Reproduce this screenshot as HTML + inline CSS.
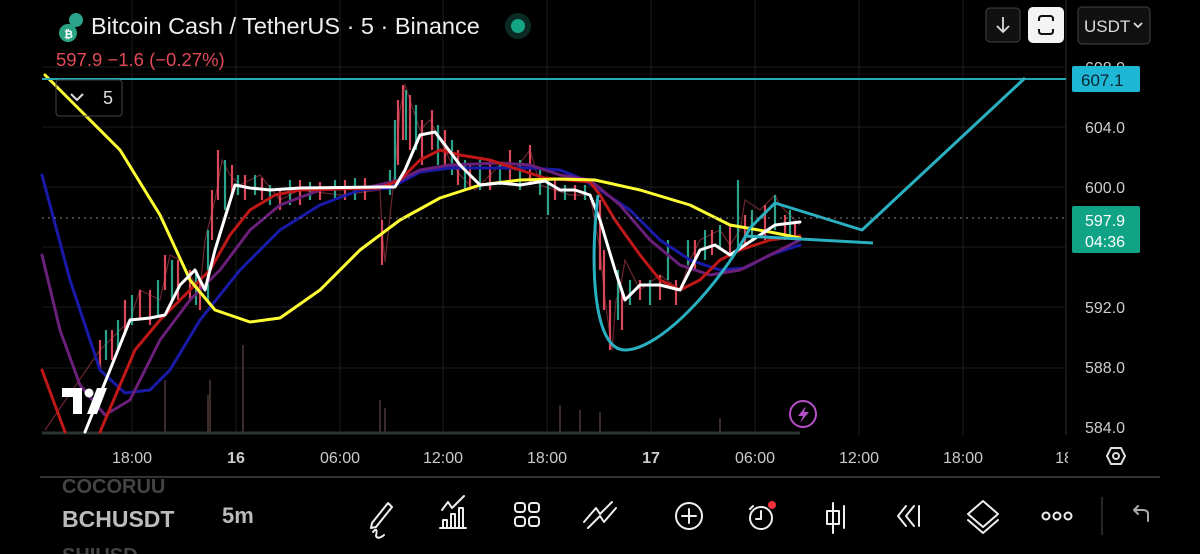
<!DOCTYPE html>
<html><head><meta charset="utf-8"><style>
html,body{margin:0;padding:0;background:#000;width:1200px;height:554px;overflow:hidden;font-family:"Liberation Sans",sans-serif}
svg{position:absolute;left:0;top:0}
</style></head><body>
<svg width="1200" height="554" viewBox="0 0 1200 554" xmlns="http://www.w3.org/2000/svg">
<rect width="1200" height="554" fill="#000"/>
<g stroke="#1c1c1c" stroke-width="1">
<line x1="132" y1="0" x2="132" y2="435"/><line x1="236" y1="0" x2="236" y2="435"/><line x1="340" y1="0" x2="340" y2="435"/><line x1="443" y1="0" x2="443" y2="435"/><line x1="547" y1="0" x2="547" y2="435"/><line x1="651" y1="0" x2="651" y2="435"/><line x1="755" y1="0" x2="755" y2="435"/><line x1="859" y1="0" x2="859" y2="435"/><line x1="963" y1="0" x2="963" y2="435"/>
<line x1="1066" y1="0" x2="1066" y2="435" stroke="#2a2a2a"/>
<line x1="42" y1="67" x2="1066" y2="67"/><line x1="42" y1="127" x2="1066" y2="127"/><line x1="42" y1="187" x2="1066" y2="187"/><line x1="42" y1="247" x2="1066" y2="247"/><line x1="42" y1="307" x2="1066" y2="307"/><line x1="42" y1="368" x2="1066" y2="368"/>
</g>
<g stroke="#3a2a2a" stroke-width="2">
<line x1="165" y1="433" x2="165" y2="380"/><line x1="208" y1="433" x2="208" y2="395"/><line x1="243" y1="433" x2="243" y2="345"/><line x1="210" y1="433" x2="210" y2="380"/><line x1="380" y1="433" x2="380" y2="400"/><line x1="385" y1="433" x2="385" y2="408"/><line x1="560" y1="433" x2="560" y2="405"/><line x1="580" y1="433" x2="580" y2="410"/><line x1="600" y1="433" x2="600" y2="412"/><line x1="720" y1="433" x2="720" y2="418"/>
</g>
<line x1="42" y1="433" x2="800" y2="433" stroke="#2b3530" stroke-width="3"/>
<polyline fill="none" stroke="#d14b5a" stroke-width="1.2" opacity=".5" points="45,430 100,350 130,320 140,290 160,300 170,255 180,260 200,290 205,240 215,200 222,160 230,175 240,185 260,175 280,200 300,190 340,195 380,190 382,230 385,262 395,170 400,110 405,85 410,100 420,130 430,120 440,140 450,160 460,175 475,190 500,165 515,170 530,150 540,185 570,195 590,195 600,250 605,300 612,350 616,300 620,290 625,260 640,290 660,275 680,290 690,260 700,240 720,230 730,245 740,230 745,200 760,210 775,195 780,205 800,225"/>
<path fill="none" stroke="#d9475a" stroke-width="2.2" d="M100,340V370 M112,330V360 M125,300V335 M140,290V320 M150,290V325 M165,255V290 M178,260V300 M190,270V300 M200,280V310 M212,190V240 M218,150V200 M232,165V195 M245,175V200 M262,178V200 M280,190V210 M300,180V205 M320,182V200 M345,180V200 M365,178V200 M382,220V265 M398,100V165 M403,85V140 M410,95V150 M422,120V165 M432,110V150 M445,130V165 M458,150V185 M470,165V190 M490,160V190 M510,150V180 M530,145V185 M555,180V200 M575,185V200 M600,200V270 M604,250V310 M610,300V350 M622,290V330 M640,280V300 M660,275V300 M676,280V305 M695,240V270 M712,230V255 M730,225V255 M745,215V245 M765,205V240 M785,215V240 M795,222V235"/>
<path fill="none" stroke="#2aa38a" stroke-width="2.2" d="M106,330V360 M118,320V350 M132,295V325 M158,280V315 M172,260V300 M196,270V305 M208,230V300 M225,160V210 M238,175V195 M255,175V195 M270,185V205 M290,180V205 M310,182V200 M335,180V200 M355,178V200 M390,170V195 M395,120V180 M406,90V140 M416,105V150 M438,125V165 M452,140V175 M465,160V190 M480,160V190 M500,165V185 M520,160V190 M540,170V195 M548,180V215 M565,185V200 M585,185V200 M618,270V320 M630,280V305 M650,280V305 M668,240V280 M688,240V265 M705,230V260 M720,225V250 M738,180V250 M752,210V240 M775,195V230 M790,210V235"/>
<g fill="none" stroke-width="3" stroke-linejoin="round" stroke-linecap="round">
<polyline stroke="#1a1aa8" points="42,175 70,280 100,370 125,393 150,390 170,370 200,320 240,270 280,230 320,205 360,190 390,188 420,172 450,168 500,168 530,168 560,170 580,178 600,190 630,210 660,240 690,260 720,270 745,268 770,255 800,245"/>
<polyline stroke="#6a1f78" points="42,255 60,330 80,385 105,415 130,400 160,340 190,300 220,270 250,230 280,205 320,190 370,187 400,180 420,170 450,165 500,163 530,165 560,175 590,180 620,205 650,240 680,265 710,275 740,270 770,255 800,240"/>
<polyline stroke="#c01818" points="42,370 65,432"/>
<polyline stroke="#c01818" points="100,432 135,350 160,320 190,290 210,270 230,235 250,210 275,195 300,190 380,188 400,180 420,160 440,150 460,155 490,160 520,170 545,178 590,182 600,195 615,220 640,255 660,280 680,290 700,280 720,260 740,250 770,240 800,236"/>
<polyline stroke="#ffff33" points="45,75 80,110 120,150 160,215 190,280 215,310 250,322 280,318 320,290 360,250 400,220 440,198 480,185 520,180 560,179 595,180 640,190 690,205 730,225 770,232 800,238"/>
<polyline stroke="#ffffff" points="85,432 110,370 130,320 150,318 165,315 180,285 195,270 205,290 215,250 235,185 250,188 270,190 300,188 380,187 395,187 405,170 420,135 435,132 445,145 460,165 480,185 500,183 520,185 545,181 560,190 575,190 590,195 600,220 615,270 625,300 640,285 660,285 680,290 700,250 715,245 730,255 745,245 760,235 775,225 800,222"/>
</g>
<line x1="42" y1="79" x2="1066" y2="79" stroke="#26a9b5" stroke-width="2"/>
<path d="M598,195 C590,260 592,350 625,350 C660,350 720,285 750,228 L775,203 L862,230 L1025,78 M745,236 L873,243" fill="none" stroke="#2ab0c0" stroke-width="3" stroke-linejoin="round"/>
<line x1="42" y1="218" x2="1066" y2="218" stroke="#888" stroke-width="1" stroke-dasharray="2 4"/>
<g fill="#fff"><path d="M62,388 H82 V414 H73 V397 H62 Z"/><circle cx="89" cy="393" r="4.5"/><path d="M97,388 H107 L97,414 H87 Z"/></g>
<circle cx="803" cy="414" r="13" fill="none" stroke="#b64fc8" stroke-width="2"/>
<path d="M806,406 L798,416 H803 L800,423 L809,412 H804 Z" fill="#b64fc8"/>
<g fill="#ccc" font-size="16">
<text x="1085" y="73">608.0</text><text x="1085" y="133">604.0</text><text x="1085" y="193">600.0</text><text x="1085" y="313">592.0</text><text x="1085" y="373">588.0</text><text x="1085" y="433">584.0</text>
</g>
<rect x="1072" y="66" width="68" height="26" rx="2" fill="#1eb7d6"/>
<text x="1081" y="86" fill="#0a2530" font-size="17">607.1</text>
<rect x="1072" y="206" width="68" height="47" rx="2" fill="#10a386"/>
<text x="1085" y="226" fill="#fff" font-size="16">597.9</text>
<text x="1085" y="247" fill="#fff" font-size="16">04:36</text>
<g fill="#ccc" font-size="16" text-anchor="middle">
<text x="132" y="463">18:00</text><text x="236" y="463" font-weight="bold">16</text><text x="340" y="463">06:00</text><text x="443" y="463">12:00</text><text x="547" y="463">18:00</text><text x="651" y="463" font-weight="bold">17</text><text x="755" y="463">06:00</text><text x="859" y="463">12:00</text><text x="963" y="463">18:00</text><text x="1064" y="463">18</text>
</g>
<rect x="1068" y="440" width="30" height="30" fill="#000"/>
<path d="M1107,456 L1111,448 H1121 L1125,456 L1121,464 H1111 Z" fill="none" stroke="#ddd" stroke-width="2"/><circle cx="1116" cy="456" r="3" fill="none" stroke="#ddd" stroke-width="2"/>
<line x1="40" y1="477" x2="1160" y2="477" stroke="#333" stroke-width="2"/>
<circle cx="68" cy="33" r="9" fill="#2aa383"/><text x="64" y="38" fill="#fff" font-size="11" font-weight="bold">₿</text>
<circle cx="76" cy="20" r="7" fill="#2aa38a"/>
<text x="91" y="34" fill="#eee" font-size="23.5">Bitcoin Cash / TetherUS · 5 · Binance</text>
<circle cx="518" cy="26" r="13" fill="#0c2a24"/><circle cx="518" cy="26" r="7" fill="#13a584"/>
<text x="56" y="66" fill="#e04a58" font-size="18.5">597.9  −1.6 (−0.27%)</text>
<rect x="56" y="80" width="66" height="36" rx="3" fill="none" stroke="#444"/>
<path d="M71,94 L77,100 L83,94" fill="none" stroke="#ddd" stroke-width="2"/>
<text x="103" y="104" fill="#ddd" font-size="18">5</text>
<rect x="986" y="8" width="34" height="34" rx="4" fill="#111" stroke="#444"/>
<path d="M1003,17 V32 M997,26 L1003,32 L1009,26" fill="none" stroke="#ddd" stroke-width="1.8"/>
<rect x="1028" y="7" width="36" height="36" rx="5" fill="#f4f4f4"/>
<path d="M1039,21 V19 Q1039,16 1042,16 H1050 Q1053,16 1053,19 V21 M1039,29 V31 Q1039,34 1042,34 H1050 Q1053,34 1053,31 V29" fill="none" stroke="#111" stroke-width="2"/>
<rect x="1078" y="7" width="72" height="37" rx="4" fill="#111" stroke="#444"/>
<text x="1084" y="32" fill="#ddd" font-size="17">USDT</text>
<path d="M1134,23 L1138,27 L1142,23" fill="none" stroke="#ddd" stroke-width="1.8"/>
<text x="62" y="493" fill="#444" font-size="20" font-weight="bold">COCORUU</text>
<text x="62" y="527" fill="#bbb" font-size="23" font-weight="bold">BCHUSDT</text>
<text x="222" y="523" fill="#bbb" font-size="22" font-weight="bold">5m</text>
<text x="62" y="562" fill="#444" font-size="20" font-weight="bold">SHIUSD</text>
<g fill="none" stroke="#eee" stroke-width="2" stroke-linecap="round" stroke-linejoin="round">
<path d="M372,523 L388,503 L392,507 L376,527 L371,528 Z M373,532 Q378,526 376,536 Q378,540 384,535"/>
<path d="M442,510 L448,502 L452,508 L464,496 M443,528 V520 H447 V528 M451,528 V514 H455 V528 M459,528 V508 H463 V528 M440,528 H466"/>
<rect x="515" y="503" width="10" height="9" rx="3"/><rect x="529" y="503" width="10" height="9" rx="3"/><rect x="515" y="517" width="10" height="9" rx="3"/><rect x="529" y="517" width="10" height="9" rx="3"/>
<path d="M584,522 L596,508 L600,514 L612,502 M588,528 L600,516 L604,522 L616,508"/>
<circle cx="689" cy="516" r="13"/><path d="M689,509 V523 M682,516 H696"/>
<circle cx="761" cy="518" r="11"/><path d="M761,511 V519 H756 M753,506 L750,509"/>
<path d="M833,503 V533 M827,511 H839 V524 H827 Z M844,506 V528"/>
<path d="M906,506 L898,516 L906,526 M914,506 L906,516 L914,526 M919,506 V526"/>
<path d="M983,501 L998,514 L983,527 L968,514 Z M968,520 L983,533 L998,520"/>
<circle cx="1046" cy="516" r="3.5"/><circle cx="1057" cy="516" r="3.5"/><circle cx="1068" cy="516" r="3.5"/>
<path d="M1148,521 V514 Q1148,510 1142,510 H1134 M1138,506 L1134,510 L1138,514" stroke="#aaa"/>
</g>
<circle cx="772" cy="505" r="4" fill="#f0303a"/>
<line x1="1102" y1="497" x2="1102" y2="535" stroke="#333" stroke-width="1.5"/>
</svg>
</body></html>
